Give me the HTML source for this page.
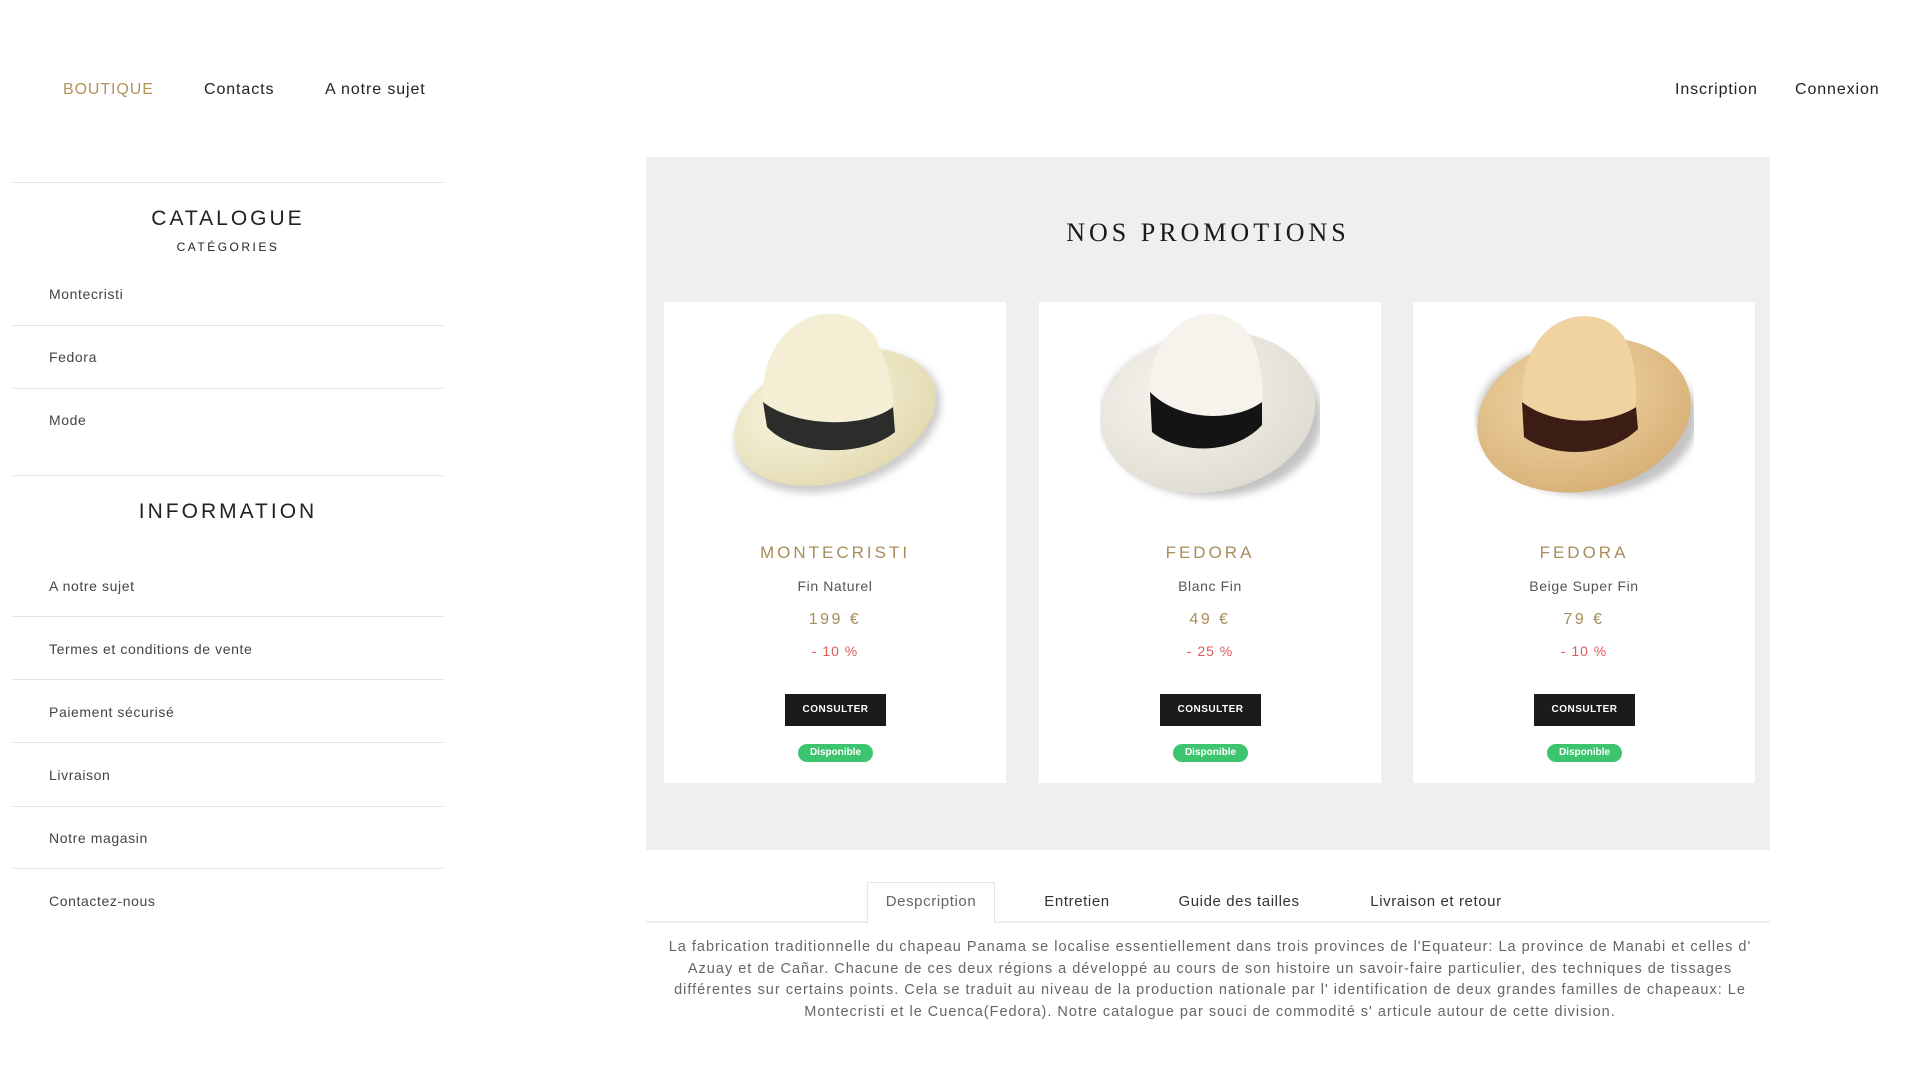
<!DOCTYPE html>
<html><head><meta charset="utf-8">
<style>
*{margin:0;padding:0;box-sizing:border-box}
body{width:1920px;height:1080px;background:#fff;font-family:"Liberation Sans",sans-serif;color:#333;position:relative;overflow:hidden}
.a{position:absolute;white-space:nowrap}
.nav{font-size:16px;letter-spacing:.9px;color:#222;top:81px}
.line{position:absolute;left:13px;width:430px;height:1px;background:#e3e3e3}
.item{position:absolute;left:49px;font-size:14px;letter-spacing:.6px;color:#444}
.h{position:absolute;left:13px;width:430px;text-align:center;letter-spacing:3px;color:#222}
.panel{position:absolute;left:646px;top:157px;width:1124px;height:693px;background:#efeff1}
.card{position:absolute;top:302px;width:342px;height:481px;background:#fff;text-align:center}
.card svg{position:absolute;left:61px;top:5px}
.t{position:absolute;left:0;width:100%;top:241px;font-size:17px;letter-spacing:3px;color:#a88c5a}
.s{position:absolute;left:0;width:100%;top:276px;font-size:14px;letter-spacing:.6px;color:#555}
.p{position:absolute;left:0;width:100%;top:309px;font-size:16px;letter-spacing:2.5px;color:#a88c5a}
.d{position:absolute;left:0;width:100%;top:341px;font-size:14px;letter-spacing:1px;color:#e05a5a}
.b{position:absolute;left:121px;top:392px;width:101px;height:32px;background:#1b1b1b;color:#fff;font-size:10px;font-weight:bold;line-height:32px;letter-spacing:.5px}
.g{position:absolute;left:134px;top:442px;width:75px;height:18px;border-radius:9px;background:#3cc46e;color:#fff;font-size:10px;font-weight:bold;line-height:18px}
.tab{position:absolute;top:893px;font-size:15px;letter-spacing:.6px;color:#333;transform:translateX(-50%)}
</style></head><body>
<div class="a nav" style="left:63px;color:#b3925e">BOUTIQUE</div>
<div class="a nav" style="left:204px">Contacts</div>
<div class="a nav" style="left:325px">A notre sujet</div>
<div class="a nav" style="left:1675px">Inscription</div>
<div class="a nav" style="left:1795px">Connexion</div>

<div class="line" style="top:182px"></div>
<div class="h" style="top:207px;font-size:21px">CATALOGUE</div>
<div class="h" style="top:240px;font-size:12px;letter-spacing:2.5px">CATÉGORIES</div>
<div class="item" style="top:286px">Montecristi</div>
<div class="line" style="top:325px"></div>
<div class="item" style="top:349px">Fedora</div>
<div class="line" style="top:388px"></div>
<div class="item" style="top:412px">Mode</div>
<div class="line" style="top:475px"></div>
<div class="h" style="top:500px;font-size:21px">INFORMATION</div>
<div class="item" style="top:578px">A notre sujet</div>
<div class="line" style="top:616px"></div>
<div class="item" style="top:641px">Termes et conditions de vente</div>
<div class="line" style="top:679px"></div>
<div class="item" style="top:704px">Paiement sécurisé</div>
<div class="line" style="top:742px"></div>
<div class="item" style="top:767px">Livraison</div>
<div class="line" style="top:806px"></div>
<div class="item" style="top:830px">Notre magasin</div>
<div class="line" style="top:868px"></div>
<div class="item" style="top:893px">Contactez-nous</div>

<div class="panel"></div>
<div class="a" style="left:646px;width:1124px;text-align:center;top:218px;font-family:'Liberation Serif',serif;font-size:26px;letter-spacing:4px;color:#1a1a1a">NOS PROMOTIONS</div>

<div class="card" style="left:664px">
<svg width="220" height="195" viewBox="0 0 220 195">
<defs><radialGradient id="c1" cx=".4" cy=".35" r=".7"><stop offset="0" stop-color="#fbf8e6"/><stop offset="1" stop-color="#e2d9ae"/></radialGradient>
<filter id="sh"><feGaussianBlur stdDeviation="4"/></filter></defs>
<ellipse cx="113" cy="115" rx="106" ry="66" transform="rotate(-18 113 115)" fill="#999" opacity=".5" filter="url(#sh)"/>
<ellipse cx="110" cy="110" rx="104" ry="64" transform="rotate(-18 110 110)" fill="url(#c1)"/>
<path d="M38 95 C36 60 50 25 85 10 C110 2 135 8 150 30 C160 50 170 80 168 105 C140 125 70 125 38 95Z" fill="#f3eed4"/>
<path d="M38 95 C70 120 140 122 168 100 L170 125 C140 150 70 150 42 120Z" fill="#2c2c2a"/>
</svg>
<div class="t">MONTECRISTI</div><div class="s">Fin Naturel</div><div class="p">199 €</div><div class="d">- 10 %</div>
<div class="b">CONSULTER</div><div class="g">Disponible</div></div>

<div class="card" style="left:1039px">
<svg width="220" height="195" viewBox="0 0 220 195">
<defs><radialGradient id="c2" cx=".4" cy=".35" r=".7"><stop offset="0" stop-color="#f7f5ee"/><stop offset="1" stop-color="#dedbd2"/></radialGradient></defs>
<ellipse cx="112" cy="110" rx="110" ry="80" fill="#888" opacity=".5" filter="url(#sh)"/>
<ellipse cx="108" cy="105" rx="108" ry="80" transform="rotate(-10 108 105)" fill="url(#c2)"/>
<path d="M50 110 C45 70 55 20 100 8 C135 2 155 25 160 60 C165 85 162 100 160 105 C130 125 80 125 50 110Z" fill="#f5f3ec"/>
<path d="M50 85 C80 115 135 115 162 95 L162 118 C135 148 80 148 52 125Z" fill="#141414"/>
</svg>
<div class="t">FEDORA</div><div class="s">Blanc Fin</div><div class="p">49 €</div><div class="d">- 25 %</div>
<div class="b">CONSULTER</div><div class="g">Disponible</div></div>

<div class="card" style="left:1413px">
<svg width="220" height="195" viewBox="0 0 220 195">
<defs><radialGradient id="c3" cx=".45" cy=".35" r=".7"><stop offset="0" stop-color="#f2d8a8"/><stop offset="1" stop-color="#d6ae74"/></radialGradient></defs>
<ellipse cx="113" cy="112" rx="110" ry="76" fill="#888" opacity=".5" filter="url(#sh)"/>
<ellipse cx="110" cy="108" rx="108" ry="76" transform="rotate(-12 110 108)" fill="url(#c3)"/>
<path d="M48 110 C45 70 55 20 100 10 C135 5 155 25 160 60 C164 85 162 100 160 105 C130 125 80 125 48 110Z" fill="#efd3a0"/>
<path d="M48 95 C80 120 135 118 162 100 L164 122 C135 150 80 152 50 130Z" fill="#3b1d16"/>
</svg>
<div class="t">FEDORA</div><div class="s">Beige Super Fin</div><div class="p">79 €</div><div class="d">- 10 %</div>
<div class="b">CONSULTER</div><div class="g">Disponible</div></div>

<div style="position:absolute;left:646px;top:921px;width:1124px;height:2px;background:#eee"></div>
<div style="position:absolute;left:867px;top:882px;width:128px;height:41px;background:#fff;border:1px solid #e6e6e6;border-bottom:none"></div>
<div class="tab" style="left:931px;color:#666">Despcription</div>
<div class="tab" style="left:1077px">Entretien</div>
<div class="tab" style="left:1239px">Guide des tailles</div>
<div class="tab" style="left:1436px">Livraison et retour</div>

<div style="position:absolute;left:610px;top:937px;width:1200px;text-align:center;font-size:14.5px;line-height:21.6px;letter-spacing:1px;color:#666">La fabrication traditionnelle du chapeau Panama se localise essentiellement dans trois provinces de l'Equateur: La province de Manabi et celles d'<br>Azuay et de Cañar. Chacune de ces deux régions a développé au cours de son histoire un savoir-faire particulier, des techniques de tissages<br>différentes sur certains points. Cela se traduit au niveau de la production nationale par l' identification de deux grandes familles de chapeaux: Le<br>Montecristi et le Cuenca(Fedora). Notre catalogue par souci de commodité s' articule autour de cette division.</div>
</body></html>
